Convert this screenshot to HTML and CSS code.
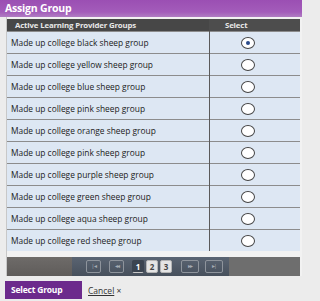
FILE: index.html
```html
<!DOCTYPE html>
<html>
<head>
<meta charset="utf-8">
<link rel="stylesheet" href="styles.css">
</head>
<body>
<div class="dialog">
  <div class="titlebar">Assign Group</div>
  <div class="content">
    <table class="grid">
      <thead>
        <tr><th class="name-h">Active Learning Provider Groups</th><th class="sel-h">Select</th></tr>
      </thead>
      <tbody>
        <tr><td class="name">Made up college black sheep group</td><td class="sel"><span class="radio checked"></span></td></tr>
        <tr><td class="name">Made up college yellow sheep group</td><td class="sel"><span class="radio"></span></td></tr>
        <tr><td class="name">Made up college blue sheep group</td><td class="sel"><span class="radio"></span></td></tr>
        <tr><td class="name">Made up college pink sheep group</td><td class="sel"><span class="radio"></span></td></tr>
        <tr><td class="name">Made up college orange sheep group</td><td class="sel"><span class="radio"></span></td></tr>
        <tr><td class="name">Made up college pink sheep group</td><td class="sel"><span class="radio"></span></td></tr>
        <tr><td class="name">Made up college purple sheep group</td><td class="sel"><span class="radio"></span></td></tr>
        <tr><td class="name">Made up college green sheep group</td><td class="sel"><span class="radio"></span></td></tr>
        <tr><td class="name">Made up college aqua sheep group</td><td class="sel"><span class="radio"></span></td></tr>
        <tr><td class="name">Made up college red sheep group</td><td class="sel"><span class="radio"></span></td></tr>
      </tbody>
    </table>
    <div class="pager">
      <div class="pager-left"></div>
      <div class="pager-mid">
        <span class="pbtn nav">|&#9666;</span>
        <span class="pbtn nav">&#9666;&#9666;</span>
        <span class="pnum current">1</span>
        <span class="pnum">2</span>
        <span class="pnum last">3</span>
        <span class="pbtn nav wide">&#9656;&#9656;</span>
        <span class="pbtn nav wide">&#9656;|</span>
      </div>
      <div class="pager-right"></div>
    </div>
  </div>
  <div class="footer">
    <span class="btn-primary">Select Group</span>
    <span class="cancel"><span class="cancel-text">Cancel</span> &#215;</span>
  </div>
</div>
</body>
</html>
```
FILE: styles.css
```css
html, body {
  margin: 0;
  padding: 0;
}
body {
  width: 302px;
  height: 301px;
  overflow: hidden;
  background: #ececec;
  font-family: "Open Sans", "Liberation Sans", Arial, sans-serif;
}
.dialog {
  width: 302px;
}
.titlebar {
  height: 17px;
  line-height: 17px;
  background: linear-gradient(#9b4fb3 0%, #a35cba 70%, #b07cc2 100%);
  color: #ffffff;
  font-weight: bold;
  font-size: 10.5px;
  padding-left: 5px;
  letter-spacing: -0.2px;
}
.content {
  background: #f2f2f2;
  padding: 2px 2px 0 0;
  border-left: 1px solid #c8c8c8;
  margin-left: 6px;
}
.grid {
  width: 293px;
  border-collapse: collapse;
  table-layout: fixed;
}
.grid th {
  height: 12px;
  padding: 0;
  background: #474747;
  color: #e8e8e8;
  font-size: 7.8px;
  font-weight: bold;
  line-height: 12px;
  vertical-align: bottom;
  letter-spacing: -0.15px;
}
.name-h {
  width: 202px;
  text-align: left;
  padding-left: 8px !important;
  box-sizing: border-box;
}
.sel-h {
  text-align: left;
  padding-left: 16px !important;
  background: #4d4d4d !important;
}
.grid td {
  height: 21px;
  padding: 0;
  background: #dde7f3;
  border-top: 1px solid #8c8c8c;
  font-size: 8.4px;
  color: #222;
  line-height: 12px;
}
.grid td.name {
  padding-left: 4px;
  border-right: 1px solid #5a5a5a;
  white-space: nowrap;
  vertical-align: middle;
}
.grid td.sel {
  padding-left: 31px;
  vertical-align: middle;
}
.radio {
  display: block;
  width: 12px;
  height: 10px;
  border-radius: 50%;
  border: 1px solid #444;
  background: #ffffff;
  position: relative;
}
.radio.checked::after {
  content: "";
  position: absolute;
  left: 4px;
  top: 3px;
  width: 4px;
  height: 4px;
  border-radius: 50%;
  background: #2a4a8a;
}
.pager {
  display: flex;
  height: 19px;
  margin-top: 6px;
  width: 293px;
}
.pager-left {
  width: 65px;
  background: linear-gradient(#6e6b69, #5f5c5a);
}
.pager-mid {
  width: 157px;
  background: linear-gradient(#5a6472, #47505c);
  display: flex;
  align-items: center;
  padding-left: 14px;
  box-sizing: border-box;
}
.pager-right {
  flex: 1;
  background: #6e6e6e;
}
.pbtn {
  height: 11px;
  width: 13px;
  border: 1px solid #8e949c;
  border-radius: 2px;
  color: #a6acb4;
  font-size: 6px;
  line-height: 11px;
  text-align: center;
  margin-right: 8px;
  letter-spacing: -1px;
}
.pbtn.wide {
  width: 16px;
  margin-right: 5px;
  margin-left: 1px;
}
.pnum {
  height: 11px;
  width: 10px;
  border: 1px solid #b5b5b5;
  border-radius: 2px;
  background: #e4e4e4;
  color: #444;
  font-size: 8px;
  font-weight: bold;
  line-height: 11px;
  text-align: center;
  margin-right: 2px;
}
.pnum.current {
  background: #3b4450;
  color: #ffffff;
  border-color: #3b4450;
  border-bottom: 1px solid #c9c9c9;
}
.pnum.last {
  margin-right: 8px;
}
.footer {
  display: flex;
  align-items: center;
  padding: 5px 0 0 5px;
}
.btn-primary {
  display: block;
  width: 77px;
  height: 18px;
  line-height: 17px;
  background: #6c2a8c;
  color: #ffffff;
  font-size: 8.5px;
  font-weight: bold;
  padding-left: 6px;
  box-sizing: border-box;
  letter-spacing: -0.2px;
}
.cancel {
  margin-left: 6px;
  font-size: 8.5px;
  color: #333;
}
.cancel-text {
  text-decoration: underline;
}
```
